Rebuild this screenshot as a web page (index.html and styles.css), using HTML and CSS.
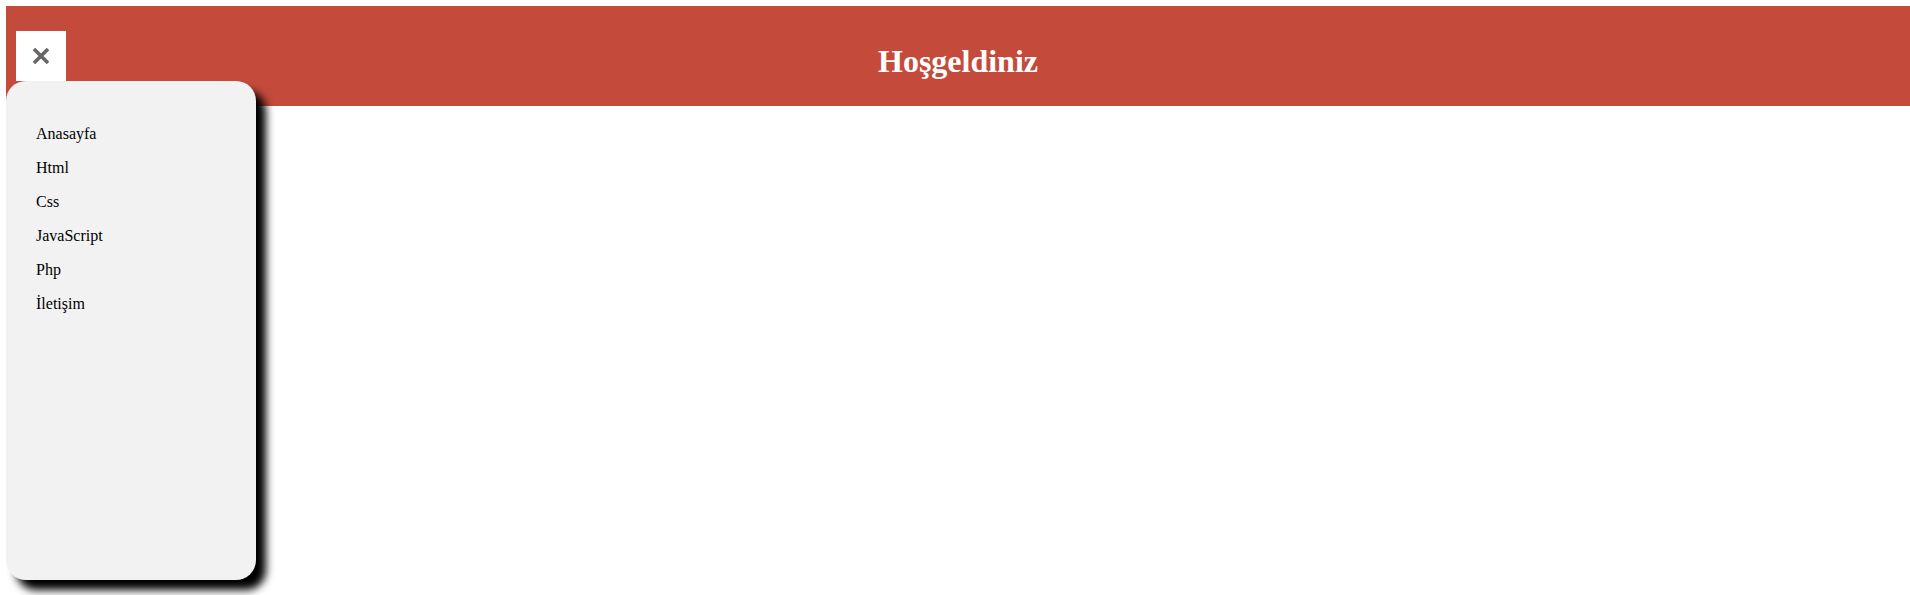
FILE: index.html
```html
<!DOCTYPE html>
<html lang="tr">
<head>
<meta charset="utf-8">
<title>Hoşgeldiniz</title>
<link rel="stylesheet" href="styles.css">
</head>
<body>
<header class="header">
  <h1 class="title">Hoşgeldiniz</h1>
</header>
<button class="close-btn" aria-label="Kapat">
  <svg width="18" height="18" viewBox="0 0 18 18"><path d="M2 2 L16 16 M16 2 L2 16" stroke="#666" stroke-width="3.6" stroke-linecap="butt"/></svg>
</button>
<nav class="sidebar">
  <a class="item" href="#">Anasayfa</a>
  <a class="item" href="#">Html</a>
  <a class="item" href="#">Css</a>
  <a class="item" href="#">JavaScript</a>
  <a class="item" href="#">Php</a>
  <a class="item" href="#">İletişim</a>
</nav>
</body>
</html>
```
FILE: styles.css
```css
html, body {
  background: #fff;
}
body {
  margin: 6px 0 0 6px;
  font-family: "Liberation Serif", "Times New Roman", serif;
  overflow: hidden;
}
.header {
  background: #c44b3b;
  height: 100px;
  box-sizing: border-box;
  padding-top: 37px;
  text-align: center;
}
.title {
  margin: 0;
  font-size: 32px;
  line-height: 37px;
  font-weight: bold;
  color: #fff;
}
.close-btn {
  position: absolute;
  left: 16px;
  top: 31px;
  width: 50px;
  height: 50px;
  padding: 0;
  border: 0;
  background: #fff;
  display: flex;
  align-items: center;
  justify-content: center;
  cursor: pointer;
}
.sidebar {
  position: absolute;
  left: 6px;
  top: 81px;
  width: 250px;
  height: 499px;
  box-sizing: border-box;
  padding: 36px 0 0 30px;
  background: #f2f2f2;
  border-radius: 20px;
  box-shadow: 10px 10px 8px #000;
  display: flex;
  flex-direction: column;
}
.item {
  display: block;
  padding: 8px 0;
  font-size: 16px;
  line-height: 18px;
  color: #000;
  text-decoration: none;
}
```
